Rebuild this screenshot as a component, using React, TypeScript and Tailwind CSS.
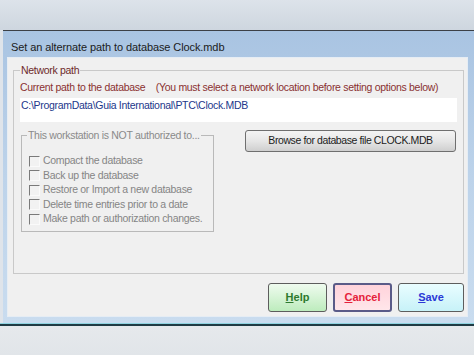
import React from 'react'

const permissions = [
  'Compact the database',
  'Back up the database',
  'Restore or Import a new database',
  'Delete time entries prior to a date',
  'Make path or authorization changes.',
]

function Checkbox() {
  return (
    <span className="inline-block w-[11px] h-[11px] shrink-0 border-t border-l border-[#7a7a7a] border-b border-r border-b-[#fafafa] border-r-[#fafafa] bg-[#f2f2f2]" />
  )
}

export default function App() {
  return (
    <div
      className="w-[474px] h-[355px] overflow-hidden flex flex-col bg-[#dfe4ea]"
      style={{ fontFamily: '"Liberation Sans", Arial, sans-serif' }}
    >
      {/* desktop strip above */}
      <div className="h-[30px] shrink-0 bg-gradient-to-b from-[#dde3ea] to-[#ced6df]" />

      {/* dialog frame */}
      <div className="h-[293px] shrink-0 ml-[3px] border-t border-[#3c4046] bg-gradient-to-b from-[#a9c4e2] via-[#bdd3ea] to-[#c9dcef] flex flex-col pl-[4px] pr-[6px] pb-[6px]">
        <div className="h-[26px] shrink-0 flex items-center pl-[4px] pt-[7px] text-[11px] tracking-[-0.1px] text-[#1b1b1b]">
          Set an alternate path to database Clock.mdb
        </div>

        <div className="flex-1 bg-[#f0f0f0] border border-[#e6edf4] pl-[5px] pr-[3px] pt-[6px] flex flex-col text-[10.5px] tracking-[-0.3px]">
          <fieldset className="h-[210px] border border-[#c9c9c9] px-[6px] pb-[6px]">
            <legend className="px-[1px] text-[#6e2a2a] leading-[13px]">Network path</legend>
            <div className="text-[#8a3131] mt-[4px] leading-[13px] whitespace-nowrap">
              Current path to the database&nbsp;&nbsp;&nbsp; (You must select a network location before setting options below)
            </div>
            <div className="mt-[4px] h-[24px] bg-white text-[#22378a] leading-[13px] pt-[1px] pl-[1px]">
              C:\ProgramData\Guia International\PTC\Clock.MDB
            </div>

            <div className="mt-[7px] flex items-start">
              <fieldset className="w-[193px] h-[103px] ml-[1px] border border-[#b9b9b9] pl-[7px] pt-[12px]">
                <legend className="px-[1px] -ml-[2px] text-[#8a8a8a] leading-[13px] whitespace-nowrap">
                  This workstation is NOT authorized to...
                </legend>
                <div className="flex flex-col">
                  {permissions.map((p) => (
                    <label key={p} className="flex items-center gap-[3px] h-[14.5px] text-[#858585] whitespace-nowrap">
                      <Checkbox />
                      <span>{p}</span>
                    </label>
                  ))}
                </div>
              </fieldset>

              <button className="ml-[31px] mt-[1px] w-[211px] h-[22px] rounded-[3px] border border-[#6f6f6f] bg-gradient-to-b from-[#f4f4f4] via-[#e6e6e6] to-[#cfcfcf] text-[#1c1c1c] tracking-[-0.4px]">
                Browse for database file CLOCK.MDB
              </button>
            </div>
          </fieldset>

          <div className="flex justify-end gap-[6px] mt-[9px] tracking-normal">
            <button className="w-[59px] h-[29px] rounded-[3px] border border-[#5d5d5d] bg-gradient-to-b from-[#effbef] to-[#bdecbd] text-[11px] font-bold text-[#2d7a2d]">
              <span className="underline">H</span>elp
            </button>
            <button className="w-[59px] h-[29px] rounded-[3px] border-2 border-[#5a5b88] bg-gradient-to-b from-[#ffd3db] to-[#ffe6ea] text-[11px] font-bold text-[#e5213b]">
              <span className="underline">C</span>ancel
            </button>
            <button className="w-[66px] h-[29px] rounded-[3px] border border-[#5d5d5d] bg-gradient-to-b from-[#e9fdff] to-[#c7f2f8] text-[11px] font-bold text-[#2b39d6]">
              <span className="underline">S</span>ave
            </button>
          </div>
        </div>
      </div>

      {/* desktop strip below */}
      <div className="h-[1px] shrink-0 bg-[#8fd3e0]" />
      <div className="h-[2px] shrink-0 bg-[#1f3b44]" />
      <div className="flex-1 bg-gradient-to-b from-[#e6e9ec] to-[#e1e5e9]" />
    </div>
  )
}
